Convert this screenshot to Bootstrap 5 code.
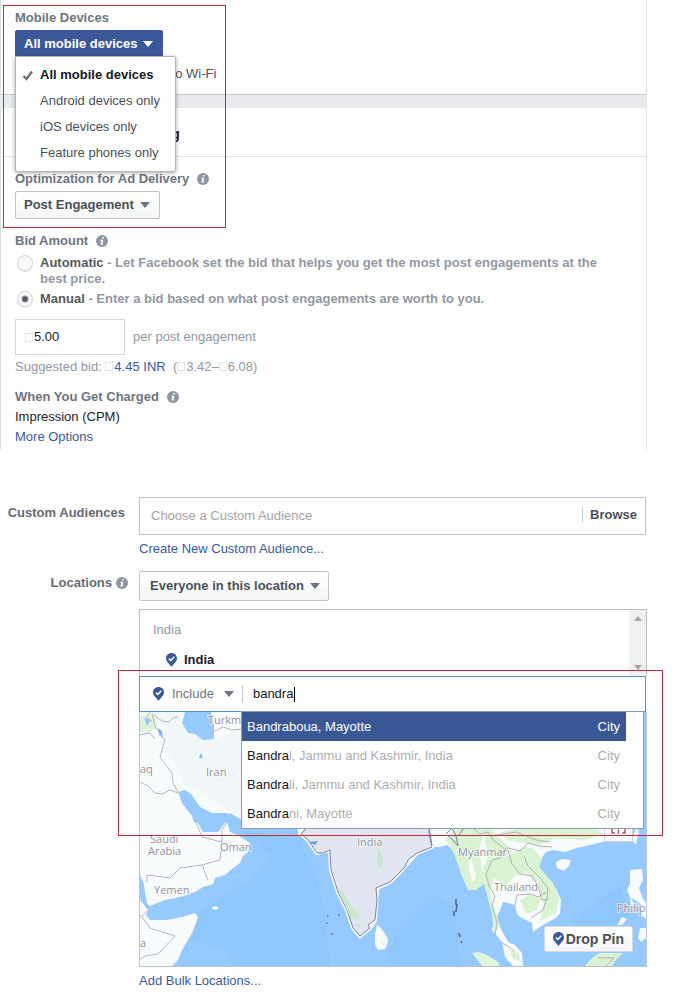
<!DOCTYPE html>
<html lang="en">
<head>
<meta charset="utf-8">
<meta name="viewport" content="width=device-width, initial-scale=1">
<title>Ad set: bidding and locations</title>
<link href="https://cdn.jsdelivr.net/npm/bootstrap@5.3.0/dist/css/bootstrap.min.css" rel="stylesheet">
<style>
  body { font-family: "Liberation Sans", Arial, sans-serif; font-size: 13px; line-height: 16px; color: #1d2129; background: #fff; }
  .page { padding-right: 48px; }
  a { color: #3b5998; text-decoration: none; }
  .panel-box { border: 0 solid #dcdde0; border-width: 0 1px; padding: 0 14px; }
  .panel-top { height: 95px; padding-top: 10px; border-bottom: 1px solid #c8c8cb; border-radius: 0 0 3px 3px; }
  .band { background: #e9eaed; }
  .band-gap { height: 13px; }
  .panel-head { height: 49px; padding-top: 18px; border-bottom: 1px solid #e1e2e4; border-radius: 3px 3px 0 0; font-size: 14px; }
  .panel-body { min-height: 292px; padding-top: 14px; }
  .space-s { margin-top: 6px; }
  .space-m { margin-top: 12px; }
  .space-l { margin-top: 14px; }
  .field-label { color: #6d7480; font-weight: bold; }
  .info { width: 12px; height: 12px; flex: none; }
  .fb-btn { font-size: 13px; line-height: 16px; font-weight: bold; border: 1px solid #c2c3c9; border-radius: 2px; color: #4b4f56; background: linear-gradient(#fff, #f5f6f7); padding: 5px 9px 5px 8px; display: inline-flex; align-items: center; gap: 6px; }
  .fb-btn .caret { color: #6d7480; }
  .fb-blue { background: #3b5998; border-color: #3b5998; color: #fff; border-radius: 2px 2px 0 0; }
  .fb-blue .caret { color: #fff; }
  .fb-wide { padding: 6px 8px 6px 10px; }
  .caret { display: inline-block; border: 5px solid transparent; border-top: 6px solid; border-bottom: 0; flex: none; border-left-color: transparent; border-right-color: transparent; }
  .caret-up { transform: rotate(180deg); }
  .device-menu { min-width: 161px; top: 46px; left: 0; padding: 5px 0; border: 1px solid #b4b5b8; border-radius: 0 2px 2px 2px; font-size: 13px; box-shadow: 0 1px 4px rgba(0,0,0,.35); }
  .device-menu .dropdown-item { padding: 5px 8px 5px 24px; line-height: 16px; color: #4b4f56; }
  .device-menu .chosen { color: #141823; position: relative; }
  .tick { position: absolute; left: 6px; top: 8px; width: 12px; height: 11px; }
  .marker { position: absolute; border: 1px solid #c02a38; pointer-events: none; z-index: 1100; }
  .marker-top { left: 3px; top: 5px; width: 223px; height: 223px; }
  .marker-map { left: -21px; right: -16px; top: 61px; height: 166px; }
  .wifi-row { margin-top: 8px; color: #4b4f56; gap: 15px; }
  .wifi-row input { margin: 0; width: 13px; height: 13px; }
  .choice { gap: 5px; font-weight: bold; color: #9197a3; padding-right: 24px; }
  .choice b { color: #58595b; }
  .choice input { appearance: none; flex: none; width: 16px; height: 16px; margin: 0 2px; border-radius: 50%; border: 1px solid #d3d4d8; background: linear-gradient(#f3f3f4, #fff); box-shadow: 0 1px 1px rgba(0,0,0,.12); }
  .choice input:checked { background: radial-gradient(circle, #54585f 0 2px, #8f939b 3px, #f8f8f9 4px); }
  .amount { width: 110px; height: 36px; border: 1px solid #d3d6db; padding: 0 9px; }
  .amount input, .plain { border: 0; outline: 0; padding: 0; background: transparent; color: #141823; min-width: 0; }
  .cur { display: inline-block; width: 8px; height: 9px; border: 1px solid #e4e4e6; margin-right: 1px; flex: none; }
  .soft { color: #9197a3; }
  .side-label { width: 139px; flex: none; color: #666a72; font-weight: bold; padding-right: 11px; }
  .side-text { padding-right: 14px; }
  .audience { height: 38px; border: 1px solid #bdc1cb; padding: 0 8px 0 11px; margin-right: 1px; }
  .audience input::placeholder { color: #a3a3a5; opacity: 1; }
  .browse { border: 0; border-left: 1px solid #c4c7ce; background: none; font-weight: bold; color: #4b4f56; padding: 0 0 0 7px; line-height: 15px; }
  .place-list { height: 67px; border: 1px solid #bdbec3; border-bottom: 0; }
  .place-rows { padding: 12px 13px 0; }
  .place-row { padding-left: 13px; margin-top: 14px; gap: 7px; }
  .bar { width: 17px; background: #f0f0f0; padding: 6px 0; color: #a3a3a3; }
  .bar .caret { border-width: 5px 4px 0; }
  .pin { width: 11px; height: 14px; flex: none; }
  .search-box { height: 36px; border: 1px solid #5890c0; padding: 0 13px; margin-right: 1px; }
  .include { border: 0; background: none; color: #6d7480; padding: 0; gap: 8px; }
  .include .caret { margin-left: 2px; }
  .split { width: 1px; height: 18px; background: #c4c7ce; margin: 0 10px 0 8px; }
  .cursor { width: 1px; height: 15px; background: #000; }
  .typed input { width: 41px; }
  .results { position: absolute; left: 102px; right: 3px; top: 102px; z-index: 20; background: #fff; border: 1px solid #8d9bb3; }
  .hit { height: 29px; padding: 0 23px 0 5px; color: #adadaf; }
  .hit b { font-weight: normal; color: #141823; }
  .hit.on { background: #3a5795; color: #fff; margin-right: 17px; padding-right: 6px; }
  .map { border: 1px solid #bdc1cb; border-top: 0; height: 255px; background: #96caff; }
  .map text { font-family: "Open Sans", "Noto Sans", sans-serif; font-size: 11px; fill: #92929f; stroke: #fff; stroke-width: 2px; stroke-opacity: .6; paint-order: stroke; }
  .drop-pin { position: absolute; right: 13px; bottom: 14px; padding: 4px 8px; gap: 2px; font-size: 14px; border-color: #d8dadf; }
  .locate { position: absolute; right: 13px; bottom: 124px; width: 29px; height: 29px; border: 1px solid #d0d3d9; background: #f8f8f9; padding: 0; display: flex; align-items: center; justify-content: center; }
</style>
</head>
<body>
<svg width="0" height="0" class="position-absolute" aria-hidden="true">
  <symbol id="i-info" viewBox="0 0 12 12"><circle cx="6" cy="6" r="6" fill="#8e95a3"/><path d="M6.400 2h1.500l-.4 1.600H6zM4.600 4.700h2.700L6.400 8.500h.8l-.2 1H4.400l.9-3.700h-.9z" fill="#fff"/></symbol>
  <symbol id="i-pin" viewBox="0 0 11 14"><path d="M5.500 0C2.400 0 0 2.300 0 5.400c0 3.100 3.200 5 5.500 8.600C7.800 10.400 11 8.500 11 5.400 11 2.300 8.600 0 5.500 0z" fill="#3b5998"/><path d="M2.900 5.600l1.900 1.900 3.400-3.700" fill="none" stroke="#fff" stroke-width="1.500"/></symbol>
</svg>
<main class="page">
  <section class="position-relative">
    <div class="band">
      <div class="panel-box panel-top bg-white">
        <div class="dropdown">
          <div class="field-label mb-1">Mobile Devices</div>
          <button class="fb-btn fb-blue" type="button" aria-expanded="true">All mobile devices <span class="caret"></span></button>
          <ul class="dropdown-menu show device-menu">
            <li><a class="dropdown-item chosen fw-bold" href="#"><svg class="tick" viewBox="0 0 12 11"><path d="M1.500 6l3 3L10 1.500" fill="none" stroke="#6b6d72" stroke-width="2.200"/></svg>All mobile devices</a></li>
            <li><a class="dropdown-item" href="#">Android devices only</a></li>
            <li><a class="dropdown-item" href="#">iOS devices only</a></li>
            <li><a class="dropdown-item" href="#">Feature phones only</a></li>
          </ul>
        </div>
        <label class="wifi-row d-flex align-items-center"><input type="checkbox">Only when connected to Wi-Fi</label>
      </div>
      <div class="band-gap"></div>
      <div class="panel-box panel-head bg-white fw-bold">Optimization and Pricing</div>
    </div>
    <div class="panel-box panel-body">
      <div class="field-label d-flex align-items-center gap-2">Optimization for Ad Delivery <svg class="info"><use href="#i-info"/></svg></div>
      <button class="fb-btn mt-1" type="button">Post Engagement <span class="caret"></span></button>
      <div class="field-label d-flex align-items-center gap-2 space-l">Bid Amount <svg class="info"><use href="#i-info"/></svg></div>
      <label class="choice d-flex space-s"><input type="radio" name="bid"><span><b>Automatic</b> - Let Facebook set the bid that helps you get the most post engagements at the best price.</span></label>
      <label class="choice d-flex mt-1"><input type="radio" name="bid" checked><span><b>Manual</b> - Enter a bid based on what post engagements are worth to you.</span></label>
      <div class="d-flex align-items-center space-m soft gap-2">
        <div class="amount d-flex align-items-center"><span class="cur"></span><input id="bid-value" class="w-100" type="text" value="5.00"></div>
        <label for="bid-value">per post engagement</label>
      </div>
      <div class="soft mt-1">Suggested bid: <a href="#"><span class="cur"></span>4.45 INR</a> &nbsp;(<span class="cur"></span>3.42–<span class="cur"></span>6.08)</div>
      <div class="field-label d-flex align-items-center gap-2 space-l">When You Get Charged <svg class="info"><use href="#i-info"/></svg></div>
      <div class="mt-1">Impression (CPM)</div>
      <a class="d-inline-block mt-1" href="#">More Options</a>
    </div>
    <div class="marker marker-top"></div>
  </section>

  <section class="d-flex mt-5">
    <label class="side-label side-text text-end pt-2" for="audience">Custom Audiences</label>
    <div class="flex-grow-1">
      <div class="audience d-flex align-items-center">
        <input id="audience" class="plain flex-grow-1" type="text" placeholder="Choose a Custom Audience">
        <button class="browse mb-1" type="button">Browse</button>
      </div>
      <a class="d-inline-block space-s" href="#">Create New Custom Audience...</a>
    </div>
  </section>

  <section class="d-flex space-l">
    <div class="side-label"><div class="d-flex justify-content-end align-items-center gap-1 pt-1">Locations <svg class="info"><use href="#i-info"/></svg></div></div>
    <div class="flex-grow-1">
      <button class="fb-btn fb-wide mb-2" type="button">Everyone in this location <span class="caret"></span></button>
      <div class="position-relative">
        <div class="place-list d-flex justify-content-between">
          <div class="place-rows">
            <div class="soft">India</div>
            <div class="place-row d-flex align-items-center fw-bold"><svg class="pin"><use href="#i-pin"/></svg>India</div>
          </div>
          <div class="bar d-flex flex-column justify-content-between align-items-center"><span class="caret caret-up"></span><span class="caret"></span></div>
        </div>
        <div class="search-box d-flex align-items-center">
          <button class="include d-flex align-items-center" type="button"><svg class="pin"><use href="#i-pin"/></svg>Include <span class="caret"></span></button>
          <span class="split"></span>
          <div class="typed d-flex align-items-center"><input class="plain" type="text" value="bandra" aria-label="Add locations"><span class="cursor"></span></div>
        </div>
        <div class="results">
          <div class="hit on d-flex justify-content-between align-items-center"><span>Bandraboua, Mayotte</span><span>City</span></div>
          <div class="hit d-flex justify-content-between align-items-center"><span><b>Bandra</b>l, Jammu and Kashmir, India</span><span>City</span></div>
          <div class="hit d-flex justify-content-between align-items-center"><span><b>Bandra</b>li, Jammu and Kashmir, India</span><span>City</span></div>
          <div class="hit d-flex justify-content-between align-items-center"><span><b>Bandra</b>ni, Mayotte</span><span>City</span></div>
        </div>
        <div class="map position-relative overflow-hidden">
          <svg class="d-block w-100 h-100" viewBox="140 712 506 254" preserveAspectRatio="xMidYMid slice" role="img" aria-label="Map of South Asia">
            <!-- deeper water -->
            <path d="M232 966L225 950 192 940 200 912 250 880 270 855 240 830 300 840 318 880 326 920 330 966zM385 966l10-30 40-40 20 10 5 60zM570 920l30-20 20-15 10 30-20 30-30-5z" fill="#8fc6fb"/>
            <!-- Middle East -->
            <path d="M140 712H300V826H242L238 819 229 813 223 822 227 822 230 832 239 836 250 843 248 852 243 856 240 863 233 868 225 875 215 878 213 884 203 887 195 892 180 897 165 900 150 906 147 903 145 893 144 884 140 875z" fill="#f8fbfc"/>
            <path d="M140 712h40v8l10 14 24 6 28-12v88l-16-6-20-15-22-10-6-18-13-14 3-14-13-20z" fill="#f1f7f8"/>
            <path d="M140 716l14-2 4 12-10 8-8-2z" fill="#ddf3dc"/>
            <path d="M144 718l7 2-4 6z" fill="#96caff"/>
            <path d="M185 712H211L214 725V739L203 740 195 734 188 733 182 723z" fill="#96caff"/>
            <path d="M158 728l4 3 1 7-4-3zM201 753l2 5h-4z" fill="#7fb9f2"/>
            <path d="M178 792L185 790 191 794 200 807 212 813 227 813 230 818 225 823 218 832H203L200 827 198 823 194 822 192 816 182 803zM230 813L242 820V829H233L228 822z" fill="#96caff"/>
            <g fill="none" stroke="#b9b4c3" stroke-width="1">
              <path d="M140 735l10-2 5 6M152 713l3 14 10 13-5 17 12 16 1 10 5 9M154 715l8 6 7 1 4-4 5-1M140 782l8 4 7 7 7 1 8-4 8 3M210 733l13-6 9 3 10-1M195 820l7 17 20 5 0-12 5-8M222 842l-2 18-18 5-22 3-10 10-23-3v7M202 865l6 15M150 712l-4 6 6 3"/>
            </g>
            <!-- Horn of Africa -->
            <path d="M139 898L144 905 148 910 146 915 150 920 167 920 182 917 195 913 198 917 192 933 182 950 178 960 172 966H139z" fill="#f8fbfc"/>
            <path d="M142 917l8 11 25 8-17 18-13 2-6 4M139 916l4 0 4-5" fill="none" stroke="#b9b4c3"/>
            <path d="M211 908l4-2 4 2-4 2z" fill="#f8fbfc"/>
            <!-- India -->
            <path d="M300 712V833L308 840 317 853 330 850 331 870 338 892 347 910 353 928 360 936 370 928 375 920 377 888 390 882 400 872 417 853 432 847 429 833 431 712z" fill="#e1e5ef" stroke="#fff" stroke-width="4"/>
            <path d="M307 828L301 834 308 840 317 853 323 853 330 850 331 870 338 892 347 910 353 928 360 936 370 928 368 925 375 920 377 900 376 888 390 882 400 872 405 867 408 860 417 853 432 847 429 833 431 712H307z" fill="#e1e5ef" stroke="#7b7ea5"/>
            <path d="M340 888l6 8 5 10 8 8-1 5-8-2-5-12-6-12zM378 846l5 10-1 13-5-6zM356 922l5 4-3 3z" fill="#c9e6cf"/>
            <path d="M308 842l10-1-3 4z" fill="#6d9fdd"/>
            <path d="M327 916h1.500M338 915h2M326 923h1.500M331 934h2" stroke="#5d80b6" stroke-width="1.500"/>
            <path d="M377 925L381 928 387 937 388 942 385 949 378 950 375 945 375 935z" fill="#f8fbfc"/>
            <path d="M380 943l5-2v5z" fill="#e5f4e3"/>
            <!-- South-East Asia -->
            <path d="M431 824L432 847 440 847 447 845 453 850 458 863 463 872 468 883 467 886 473 887 487 880 490 890 490 898 495 910 495 918 492 930 502 942 505 957 513 966H523L522 953 515 945 508 942 500 927 497 917 501 908 503 902 508 903 515 905 517 914 520 917 532 923 533 932 543 925 556 918 560 913 561 900 555 887 545 875 539 867 540 860 546 852 553 850 565 852 577 848 590 845 603 842 620 840 632 830 640 815V712H431z" fill="#f8fbfc"/>
            <g fill="#d8f2d2">
              <path d="M448 826l40 0 10 10 14 14-8 8 22-12 16 12-8 12-20 6-8 10-12-8-4 14 4 16 6 18-6 8-2-20-8-30-8 6-8 0-6-14-8-22-8-14z"/>
              <path d="M514 855l18-8 10 12-3 8 14 16 6 16-3 14-16 8 4-18-6-18-10-10-12-6z"/>
              <path d="M520 900l10-6 12 4-6 12-10 4zM500 832l34-6 60 2 10 6-20 6-30-2-16 8-30-6zM510 950l8 2 3 9-8-2z"/>
            </g>
            <path d="M470 855l6 20-3 8-4-14zM484 832l4 24-6 16-2-26zM440 826l12 4-2 8-10-2z" fill="#f8fbfc"/>
            <g fill="none" stroke="#b5b1c2">
              <path d="M470 826l10 8 8-2 5 8 13 10-6 8-8 2-6 14 3 12 6 10-3 10 5 16-2 14M500 852l8-4 12 3 8-8 10 3 14 1M508 850l4 14 8 10 12 2 6 10 4 14 5 0 1-12-8-10-12-12-4-10M515 905l2-10 14-1 7 3 8-5M547 898l-4 12-12 8M500 942l8 4 6 5M490 836l26-4 20 8 14 2"/>
            </g>
            <path d="M429 826l3 20M446 834l6-6 4 8 2 10-5-6-5-4M458 836l6-8" fill="none" stroke="#7b7ea5"/>
            <path d="M456 899v6M457 904l-1 8M454 911v5M459 933l1 4M461 941l1 2" stroke="#46648f" stroke-width="1.500"/>
            <path d="M556 862l6-3 9 1-2 6-5 5-7-3zM636 828l3 3-3 14-4-5z" fill="#f8fbfc"/>
            <path d="M630 870L642 869 643 880 639 888 643 899 646 903V908L638 902 630 897 627 890 630 884zM630 896l4 8-3 3zM622 917l5 2-5 6-5 0zM641 905l5 4v10l-4-3zM640 928l6 0v10l-5 4-3-4z" fill="#f8fbfc"/>
            <path d="M472 953L478 952 487 955 498 962 500 966H482z" fill="#e2f5df"/>
            <path d="M585 966L592 958 600 953H623L616 960 612 966z" fill="#d8f2d2"/>
            <path d="M598 958h16l-8 8" fill="none" stroke="#b5b1c2"/>
            <text x="208" y="724">Turkme</text>
            <text x="206" y="776">Iran</text>
            <text x="140" y="773">aq</text>
            <text x="150" y="843">Saudi</text>
            <text x="148" y="855">Arabia</text>
            <text x="220" y="851">Oman</text>
            <text x="154" y="894">Yemen</text>
            <text x="140" y="947">a</text>
            <text x="357" y="846">India</text>
            <text x="458" y="856">Myanmar</text>
            <text x="494" y="891">Thailand</text>
            <text x="617" y="912">Philip</text>
          </svg>
          <button class="locate" type="button" aria-label="My location"><svg width="15" height="15" viewBox="0 0 15 15"><path d="M4 5a3.500 3.500 0 0 1 7 0c0 2-2 3-3.500 5C6 8 4 7 4 5z" fill="#85828b"/><path d="M1 9v4h3M14 9v4h-3M7.500 10v4" fill="none" stroke="#a0656c" stroke-width="1.500"/></svg></button>
          <button class="fb-btn drop-pin" type="button"><svg class="pin"><use href="#i-pin"/></svg>Drop Pin</button>
        </div>
        <div class="marker marker-map"></div>
      </div>
      <a class="d-inline-block space-s" href="#">Add Bulk Locations...</a>
    </div>
  </section>
</main>
<script src="https://cdn.jsdelivr.net/npm/bootstrap@5.3.0/dist/js/bootstrap.bundle.min.js"></script>
</body>
</html>
